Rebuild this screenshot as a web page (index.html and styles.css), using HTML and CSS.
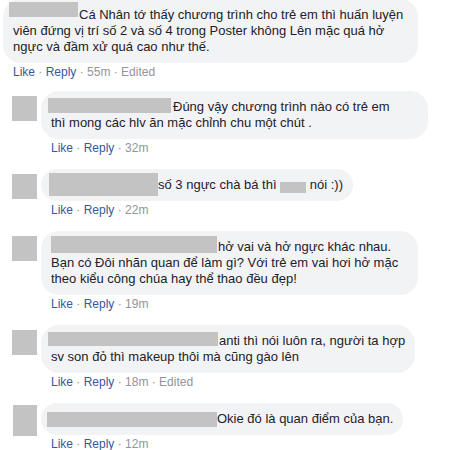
FILE: index.html
```html
<!DOCTYPE html>
<html lang="vi">
<head>
<meta charset="utf-8">
<title>Bình luận</title>
<link rel="stylesheet" href="styles.css">
</head>
<body>
<div class="thread">
  <div class="comment top">
    <div class="body">
      <div class="bubble w-c1"><span class="redact r-c1"></span>Cá Nhân tớ thấy chương trình cho trẻ em thì huấn luyện<br>viên đứng vị trí số 2 và số 4 trong Poster không Lên mặc quá hở<br>ngực và đầm xử quá cao như thế.</div>
      <div class="actions"><a class="link">Like</a><span class="dot"> · </span><a class="link">Reply</a><span class="dot"> · 55m · Edited</span></div>
    </div>
  </div>

  <div class="comment reply first">
    <div class="avatar"></div>
    <div class="body">
      <div class="bubble w-r1"><span class="redact r-r1"></span>Đúng vậy chương trình nào có trẻ em<br>thì mong các hlv ăn mặc chỉnh chu một chút .</div>
      <div class="actions"><a class="link">Like</a><span class="dot"> · </span><a class="link">Reply</a><span class="dot"> · 32m</span></div>
    </div>
  </div>

  <div class="comment reply">
    <div class="avatar"></div>
    <div class="body">
      <div class="bubble"><span class="redact r-r2"></span>số 3 ngực chà bá thì <span class="redact r-r2b"></span> nói :))</div>
      <div class="actions"><a class="link">Like</a><span class="dot"> · </span><a class="link">Reply</a><span class="dot"> · 22m</span></div>
    </div>
  </div>

  <div class="comment reply">
    <div class="avatar"></div>
    <div class="body">
      <div class="bubble w-r3"><span class="redact r-r3"></span>hở vai và hở ngực khác nhau.<br>Bạn có Đôi nhãn quan để làm gì? Với trẻ em vai hơi hở mặc<br>theo kiểu công chúa hay thể thao đều đẹp!</div>
      <div class="actions"><a class="link">Like</a><span class="dot"> · </span><a class="link">Reply</a><span class="dot"> · 19m</span></div>
    </div>
  </div>

  <div class="comment reply">
    <div class="avatar"></div>
    <div class="body">
      <div class="bubble w-r4"><span class="redact r-r4"></span>anti thì nói luôn ra, người ta hợp<br>sv son đỏ thì makeup thôi mà cũng gào lên</div>
      <div class="actions"><a class="link">Like</a><span class="dot"> · </span><a class="link">Reply</a><span class="dot"> · 18m · Edited</span></div>
    </div>
  </div>

  <div class="comment reply">
    <div class="avatar tall"></div>
    <div class="body">
      <div class="bubble"><span class="redact r-r5"></span>Okie đó là quan điểm của bạn.</div>
      <div class="actions"><a class="link">Like</a><span class="dot"> · </span><a class="link">Reply</a><span class="dot"> · 12m</span></div>
    </div>
  </div>

  <div class="rule"></div>
</div>
</body>
</html>
```

FILE: styles.css
```css
html, body {
  margin: 0;
  padding: 0;
  background: #ffffff;
}

body {
  width: 453px;
  height: 450px;
  overflow: hidden;
  font-family: "Liberation Sans", Arial, sans-serif;
  color: #1d2129;
}

.thread {
  display: flex;
  flex-direction: column;
  gap: 12px;
  margin-top: -1px;
}

.comment {
  display: flex;
  align-items: flex-start;
}

.comment.top {
  padding-left: 3px;
}

.comment.reply {
  padding-left: 12px;
}

.comment.first {
  margin-top: -2px;
}

.avatar {
  flex: none;
  width: 25px;
  height: 25px;
  margin-top: 5px;
  margin-right: 4px;
  background: #c3c3c3;
}

.avatar.tall {
  width: 24px;
  height: 31px;
  margin-top: 2px;
  margin-left: 1px;
}

.body {
  display: flex;
  flex-direction: column;
  align-items: flex-start;
}

.bubble {
  box-sizing: border-box;
  padding: 8px 10px 8px 10px;
  background: #f2f3f5;
  border-radius: 18px;
  font-size: 13px;
  line-height: 16px;
  white-space: nowrap;
}

.w-c1 { width: 415px; }
.w-r1 { width: 387px; }
.w-r3 { width: 377px; }
.w-r4 { width: 374px; }

.redact {
  display: inline-block;
  vertical-align: top;
  background: #c3c3c3;
  margin-bottom: -30px;
}

.r-c1 { width: 69px; height: 15px; margin-top: -5px; margin-left: -4px; margin-right: 1px; }
.r-r1 { width: 123px; height: 15px; margin-top: -1px; margin-left: -3px; margin-right: 2px; }
.r-r2 { width: 109px; height: 23px; margin-top: -4px; margin-left: -2px; margin-right: 0; }
.r-r2b { width: 26px; height: 11px; margin-top: 5px; }
.r-r3 { width: 166px; height: 17px; margin-top: -3px; margin-left: 0; margin-right: 1px; }
.r-r4 { width: 170px; height: 14px; margin-top: -1px; margin-left: -3px; margin-right: 1px; }
.r-r5 { width: 170px; height: 15px; margin-top: 1px; margin-left: -4px; margin-right: 0; }

.actions {
  padding-left: 10px;
  font-size: 12px;
  line-height: 18px;
  white-space: nowrap;
}

.link {
  color: #385898;
  text-decoration: none;
}

.dot {
  color: #90949c;
}

.rule {
  margin-top: -12px;
  height: 1px;
  background: #cccccc;
}
```
